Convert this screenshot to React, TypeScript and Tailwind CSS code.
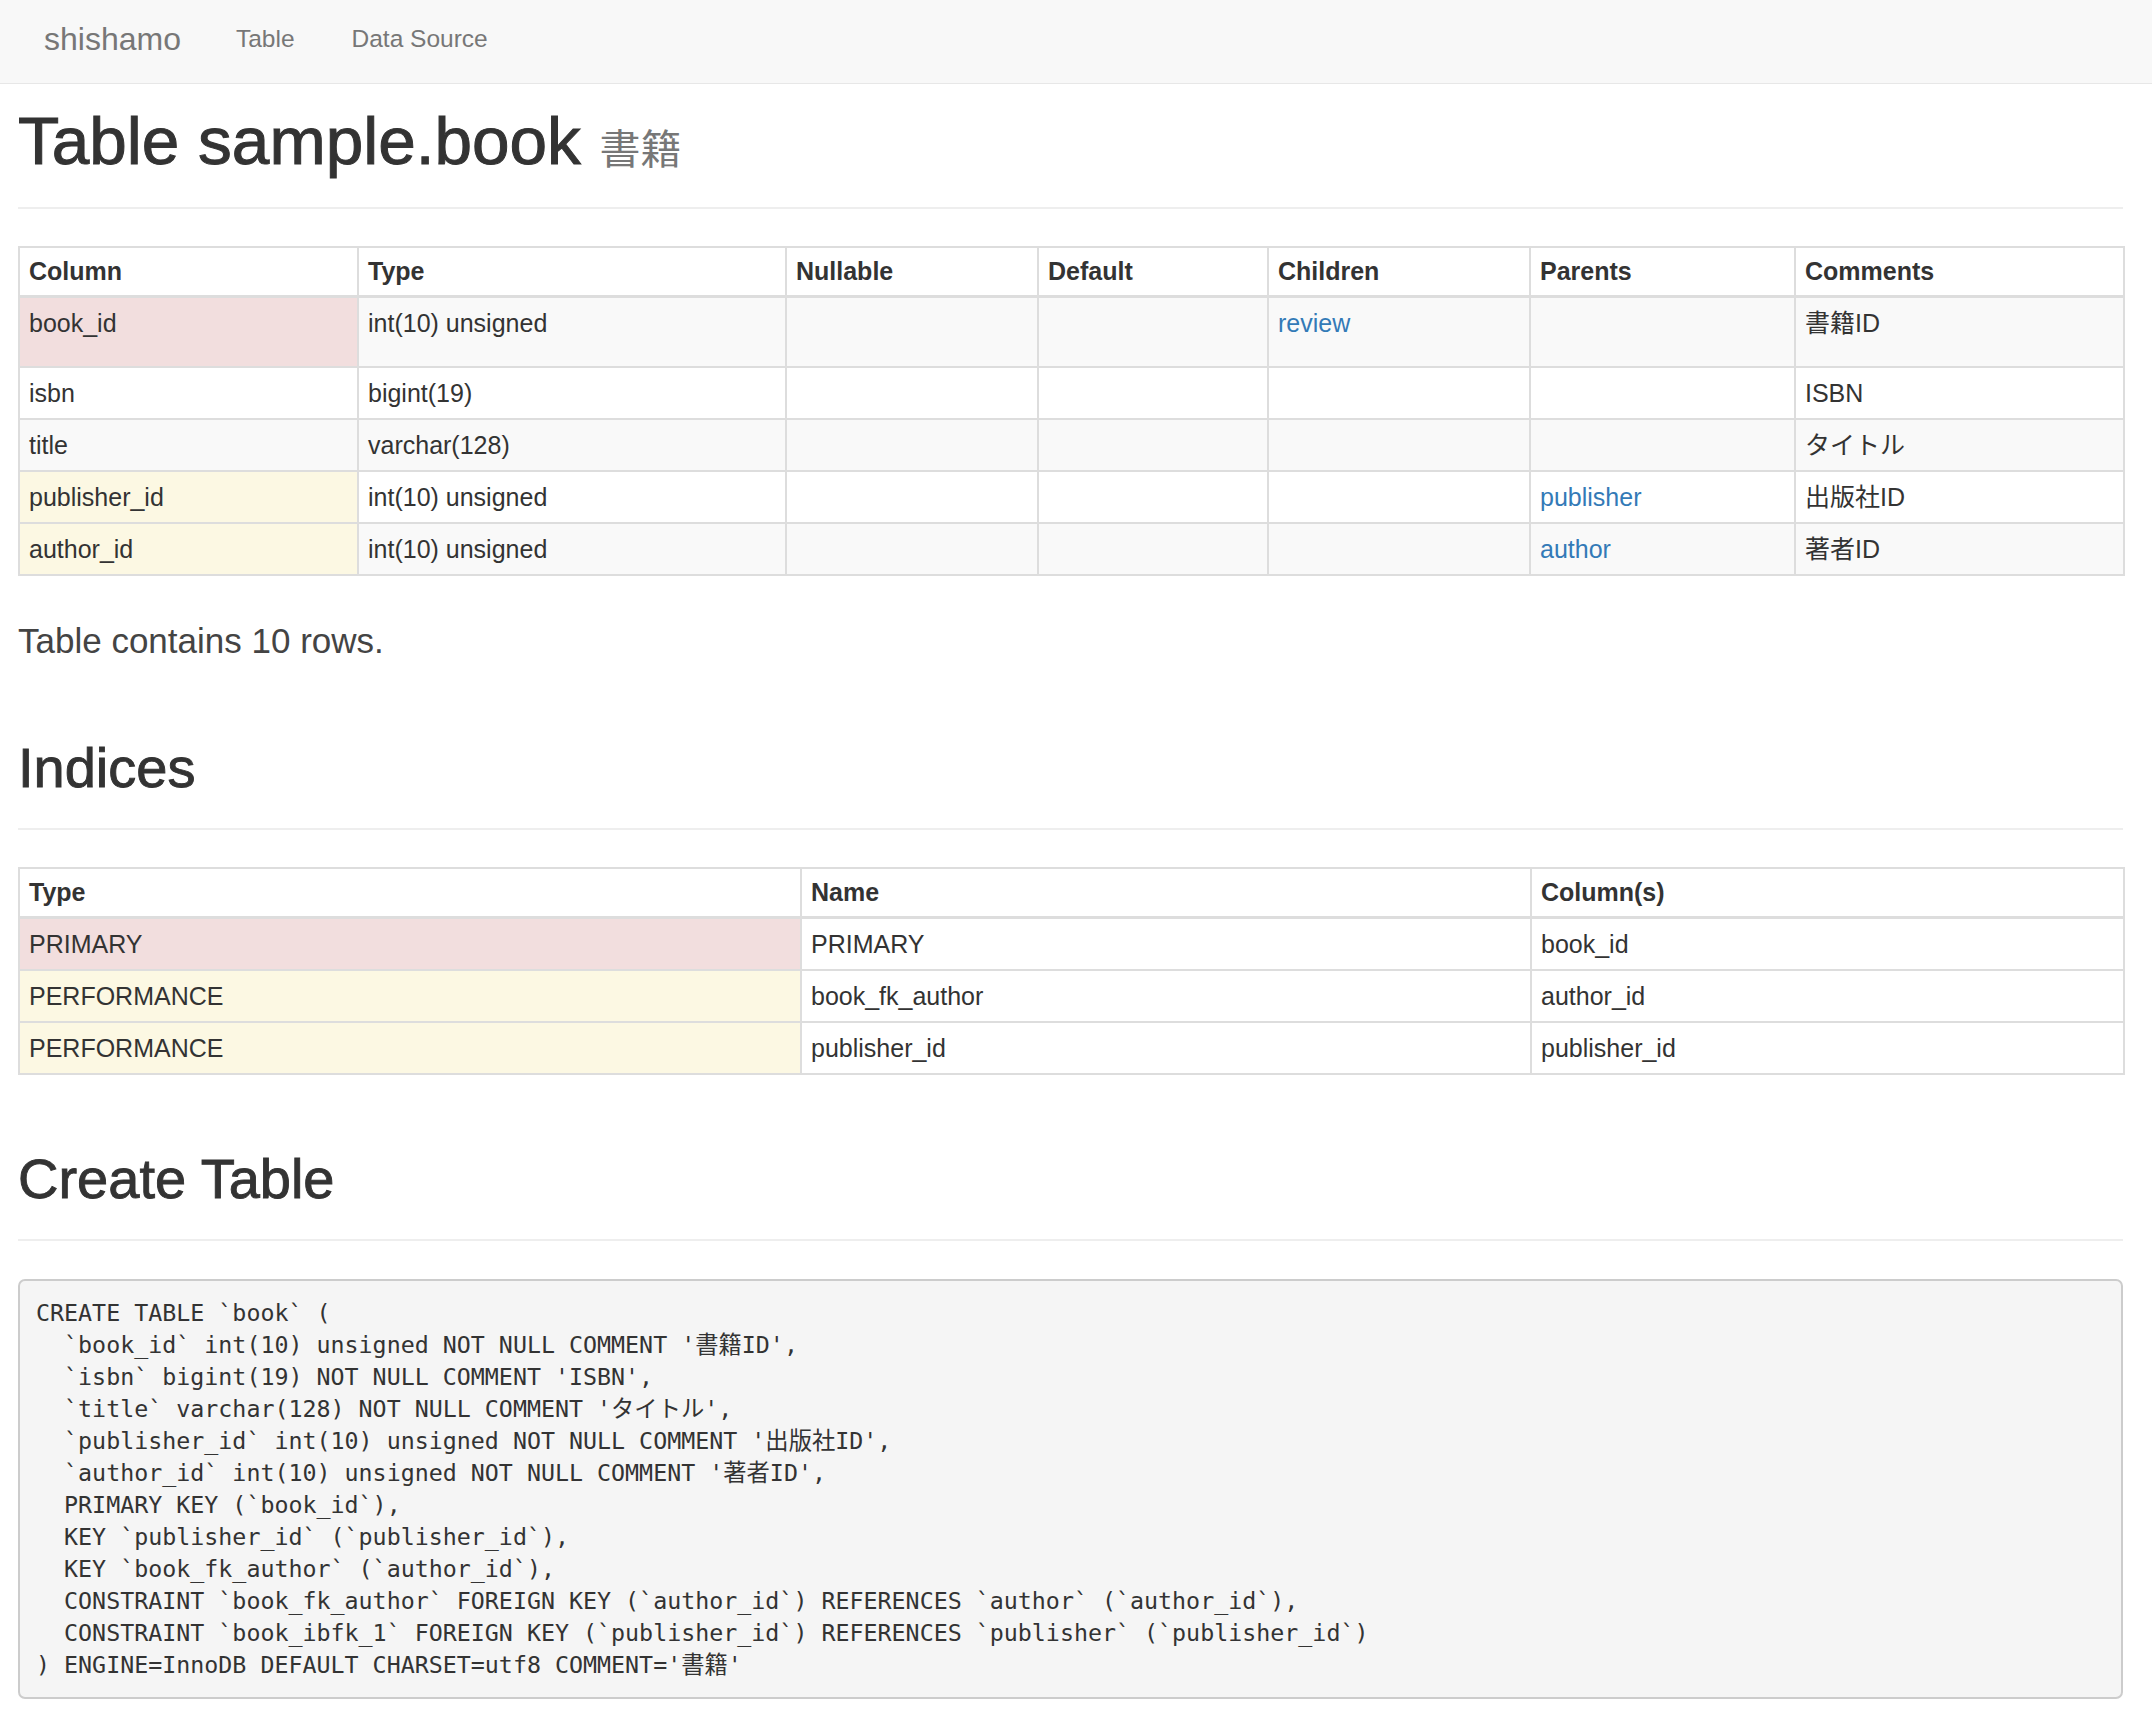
import React from 'react';

type Col = {
  name: string;
  type: string;
  children?: string;
  parents?: string;
  comment: string;
  key?: 'primary' | 'foreign';
};

const columns: Col[] = [
  { name: 'book_id', type: 'int(10) unsigned', children: 'review', comment: '書籍ID', key: 'primary' },
  { name: 'isbn', type: 'bigint(19)', comment: 'ISBN' },
  { name: 'title', type: 'varchar(128)', comment: 'タイトル' },
  { name: 'publisher_id', type: 'int(10) unsigned', parents: 'publisher', comment: '出版社ID', key: 'foreign' },
  { name: 'author_id', type: 'int(10) unsigned', parents: 'author', comment: '著者ID', key: 'foreign' },
];

const indices = [
  { type: 'PRIMARY', name: 'PRIMARY', cols: 'book_id' },
  { type: 'PERFORMANCE', name: 'book_fk_author', cols: 'author_id' },
  { type: 'PERFORMANCE', name: 'publisher_id', cols: 'publisher_id' },
];

const sql = [
  'CREATE TABLE `book` (',
  "  `book_id` int(10) unsigned NOT NULL COMMENT '書籍ID',",
  "  `isbn` bigint(19) NOT NULL COMMENT 'ISBN',",
  "  `title` varchar(128) NOT NULL COMMENT 'タイトル',",
  "  `publisher_id` int(10) unsigned NOT NULL COMMENT '出版社ID',",
  "  `author_id` int(10) unsigned NOT NULL COMMENT '著者ID',",
  '  PRIMARY KEY (`book_id`),',
  '  KEY `publisher_id` (`publisher_id`),',
  '  KEY `book_fk_author` (`author_id`),',
  '  CONSTRAINT `book_fk_author` FOREIGN KEY (`author_id`) REFERENCES `author` (`author_id`),',
  '  CONSTRAINT `book_ibfk_1` FOREIGN KEY (`publisher_id`) REFERENCES `publisher` (`publisher_id`)',
  ") ENGINE=InnoDB DEFAULT CHARSET=utf8 COMMENT='書籍'",
].join('\n');

const th = 'border-2 border-b-[3px] border-[#ddd] px-[9px] pt-[6px] pb-[7px] text-left align-top font-bold leading-[34px]';
const td = 'border-2 border-[#ddd] px-[9px] py-[8px] align-top leading-[34px]';

const SectionTitle: React.FC<{ children: React.ReactNode }> = ({ children }) => (
  <div className="border-b-2 border-[#eee] pb-[30px]">
    <h2 className="text-[56px] font-medium leading-[61px] text-[#333] [-webkit-text-stroke:0.9px_#333]">{children}</h2>
  </div>
);

export default function App() {
  return (
    <div className="min-h-screen bg-white font-['Liberation_Sans','Noto_Sans_CJK_JP',sans-serif] text-[25px] text-[#333]">
      {/* navbar */}
      <nav className="flex h-[84px] items-center border-b border-[#e7e7e7] bg-[#f8f8f8] pb-[5px] pl-[44px] text-[#777]">
        <span className="text-[32px]">shishamo</span>
        <span className="ml-[55px] text-[24.5px]">Table</span>
        <span className="ml-[57px] text-[24.5px]">Data Source</span>
      </nav>

      <div className="pl-[18px] pr-[29px]">
        <div className="mt-[20px] border-b-2 border-[#eee] pb-[20px]">
          <h1 className="text-[67.5px] font-medium leading-[73px] [-webkit-text-stroke:1px_#333]">
            Table sample.book{' '}
            <small className="text-[41px] font-normal text-[#777] [-webkit-text-stroke:0px]">書籍</small>
          </h1>
        </div>

        <table className="mt-[37px] w-full table-fixed border-collapse border-2 border-[#ddd]">
          <colgroup>
            <col className="w-[339px]" />
            <col className="w-[428px]" />
            <col className="w-[252px]" />
            <col className="w-[230px]" />
            <col className="w-[262px]" />
            <col className="w-[265px]" />
            <col className="w-[329px]" />
          </colgroup>
          <thead>
            <tr className="bg-white">
              <th className={th}>Column</th>
              <th className={th}>Type</th>
              <th className={th}>Nullable</th>
              <th className={th}>Default</th>
              <th className={th}>Children</th>
              <th className={th}>Parents</th>
              <th className={th}>Comments</th>
            </tr>
          </thead>
          <tbody>
            {columns.map((c, i) => (
              <tr key={c.name} className={`${i % 2 === 0 ? 'bg-[#f9f9f9]' : 'bg-white'} ${i === 0 ? 'h-[70px]' : ''}`}>
                <td
                  className={`${td} ${
                    c.key === 'primary' ? 'bg-[#f2dede]' : c.key === 'foreign' ? 'bg-[#fcf8e3]' : ''
                  }`}
                >
                  {c.name}
                </td>
                <td className={td}>{c.type}</td>
                <td className={td}></td>
                <td className={td}></td>
                <td className={td}>
                  {c.children && <a className="text-[#337ab7]">{c.children}</a>}
                </td>
                <td className={td}>
                  {c.parents && <a className="text-[#337ab7]">{c.parents}</a>}
                </td>
                <td className={td}>{c.comment}</td>
              </tr>
            ))}
          </tbody>
        </table>

        <p className="mt-[40px] text-[35px] font-light leading-[49px] text-[#444]">Table contains 10 rows.</p>

        <div className="mt-[72px]">
          <SectionTitle>Indices</SectionTitle>
        </div>

        <table className="mt-[37px] w-full table-fixed border-collapse border-2 border-[#ddd]">
          <colgroup>
            <col className="w-[782px]" />
            <col className="w-[730px]" />
            <col className="w-[593px]" />
          </colgroup>
          <thead>
            <tr>
              <th className={th}>Type</th>
              <th className={th}>Name</th>
              <th className={th}>Column(s)</th>
            </tr>
          </thead>
          <tbody>
            {indices.map((x) => (
              <tr key={x.name}>
                <td className={`${td} ${x.type === 'PRIMARY' ? 'bg-[#f2dede]' : 'bg-[#fcf8e3]'}`}>{x.type}</td>
                <td className={td}>{x.name}</td>
                <td className={td}>{x.cols}</td>
              </tr>
            ))}
          </tbody>
        </table>

        <div className="mt-[73px]">
          <SectionTitle>Create Table</SectionTitle>
        </div>

        <pre className="mt-[38px] whitespace-pre rounded-[7px] border-2 border-[#ccc] bg-[#f5f5f5] p-[16px] font-['DejaVu_Sans_Mono','Noto_Sans_CJK_JP',monospace] text-[23.3px] leading-[32px] text-[#333]">
          {sql}
        </pre>
      </div>
    </div>
  );
}
